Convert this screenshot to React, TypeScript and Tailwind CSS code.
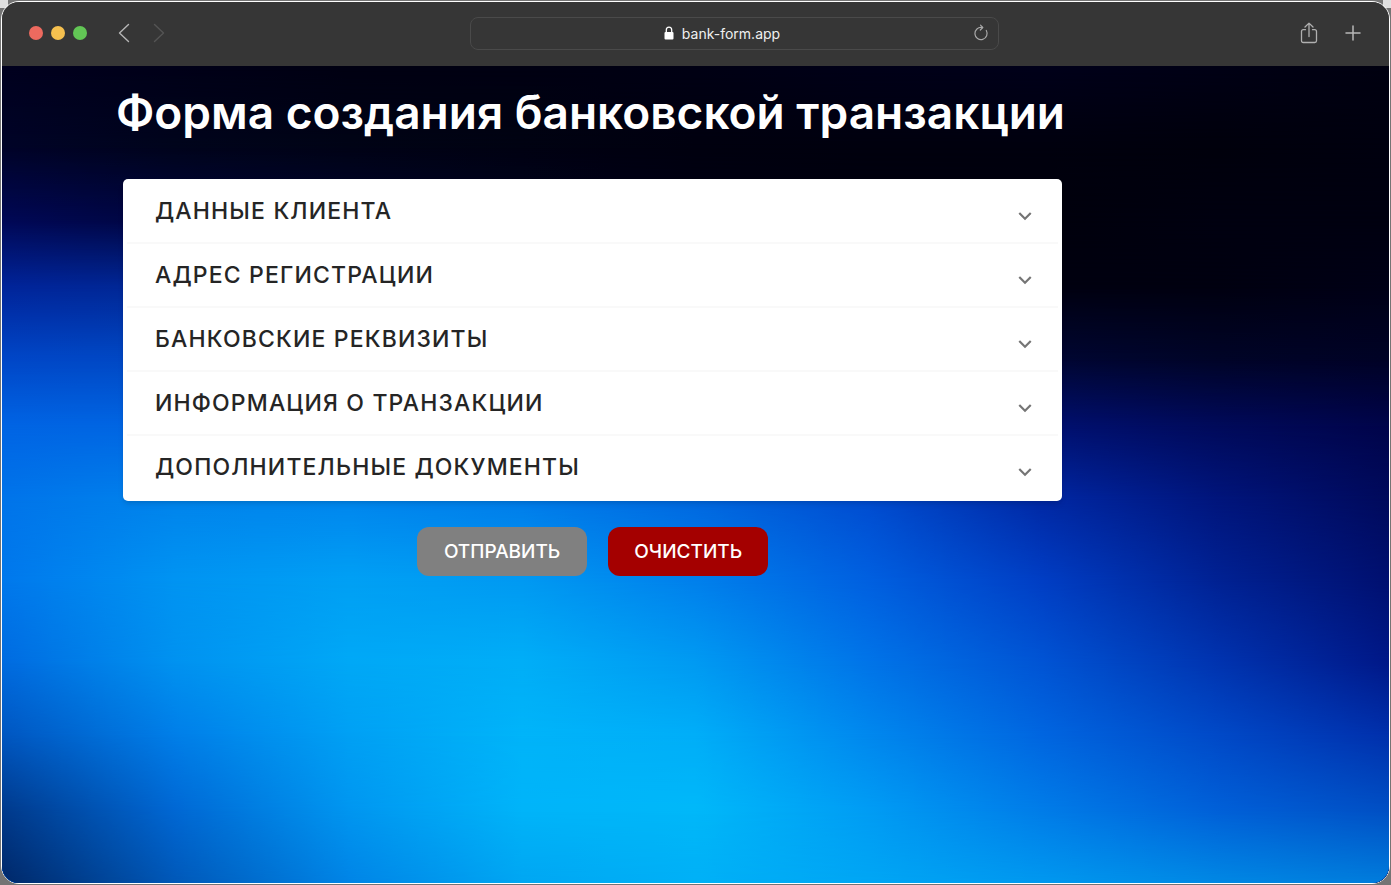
import React, { useState } from 'react';

/* Colour mesh of the backdrop: one horizontal gradient per row, blended downwards. */
const MESH: { y: number; colors: string[] }[] = [
  { y: 0, colors: ['#00001e', '#000018', '#000012', '#000012', '#000014', '#000018', '#00001a', '#000015', '#000010'] },
  { y: 10, colors: ['#000328', '#00041c', '#000316', '#000212', '#00000f', '#00000e', '#00000e', '#00000c', '#00000f'] },
  { y: 19, colors: ['#000856', '#000640', '#000430', '#000220', '#000014', '#00000e', '#00000c', '#000010', '#000010'] },
  { y: 27, colors: ['#00249a', '#002894', '#002080', '#001560', '#000a40', '#000420', '#000010', '#000010', '#000016'] },
  { y: 36, colors: ['#0047c8', '#0049c4', '#0048c0', '#0034a8', '#001c80', '#000c50', '#000634', '#000428', '#000226'] },
  { y: 44, colors: ['#0064e4', '#0066e2', '#0064e0', '#0054d0', '#0040b8', '#002490', '#001070', '#000a5a', '#00044a'] },
  { y: 53, colors: ['#0074ea', '#0084ec', '#0086ee', '#007cea', '#0068e0', '#004cd0', '#0028a4', '#00157c', '#000a5c'] },
  { y: 63, colors: ['#0078ec', '#0094f2', '#00a0f4', '#009af2', '#0080ec', '#0060e0', '#003ec4', '#002294', '#001070'] },
  { y: 73, colors: ['#006be0', '#0092f0', '#00a8f6', '#00aef7', '#009af2', '#0074e8', '#0054d4', '#0034b0', '#001888'] },
  { y: 82, colors: ['#0056c0', '#007ee8', '#00a0f4', '#00b4f9', '#00aef8', '#0088ee', '#0066e0', '#004ac8', '#0030ac'] },
  { y: 91, colors: ['#003a8c', '#0068d4', '#0096f0', '#00b4f9', '#00b8f9', '#009cf4', '#007ce8', '#0060d8', '#004fc4'] },
  { y: 100, colors: ['#002868', '#0058b8', '#0084e6', '#00a6f2', '#00b0f6', '#00a6f4', '#0098ef', '#0088e4', '#007cdc'] },
];

const SECTIONS = [
  'ДАННЫЕ КЛИЕНТА',
  'АДРЕС РЕГИСТРАЦИИ',
  'БАНКОВСКИЕ РЕКВИЗИТЫ',
  'ИНФОРМАЦИЯ О ТРАНЗАКЦИИ',
  'ДОПОЛНИТЕЛЬНЫЕ ДОКУМЕНТЫ',
];

function Backdrop() {
  return (
    <div aria-hidden="true" className="absolute inset-0 -z-10">
      {MESH.map((row, i) => {
        const fade =
          i === 0 ? undefined : `linear-gradient(to bottom, transparent ${MESH[i - 1].y}%, black ${row.y}%)`;
        return (
          <div
            key={row.y}
            className="absolute inset-0"
            style={{ backgroundImage: `linear-gradient(to right, ${row.colors.join(', ')})`, maskImage: fade }}
          />
        );
      })}
    </div>
  );
}

function BrowserBar() {
  return (
    <header className="grid h-16 grid-cols-[468fr_529fr_390fr] items-center bg-[#363636] pb-0.5">
      <div className="flex items-center pl-[27px]">
        <div className="flex gap-2">
          <span className="size-3.5 rounded-full bg-[#ed6a5f]" />
          <span className="size-3.5 rounded-full bg-[#f5c04f]" />
          <span className="size-3.5 rounded-full bg-[#62c655]" />
        </div>
        <div className="ml-7 flex gap-3.5">
          <button type="button" aria-label="Назад" className="text-[#b5b5b5]">
            <svg width="20" height="20" viewBox="0 0 20 20" fill="none" stroke="currentColor" strokeWidth="1.4" strokeLinecap="round" strokeLinejoin="round">
              <path d="M13.500 1.500 4.500 10l9 8.500" />
            </svg>
          </button>
          <button type="button" aria-label="Вперёд" className="text-[#545454]">
            <svg width="20" height="20" viewBox="0 0 20 20" fill="none" stroke="currentColor" strokeWidth="1.4" strokeLinecap="round" strokeLinejoin="round">
              <path d="m5.500 1.500 9 8.500-9 8.500" />
            </svg>
          </button>
        </div>
      </div>
      <div className="flex h-[33px] items-center rounded-lg border border-[#4a4a4a] pr-[9px]">
        <label className="flex flex-1 items-center justify-center gap-2">
          <svg width="10" height="14" viewBox="0 0 10 14" className="text-white">
            <path d="M2.300 6.500V4a2.700 2.900 0 0 1 5.400 0v2.500" fill="none" stroke="currentColor" strokeWidth="1.300" />
            <rect x="0.500" y="6" width="9" height="7.500" rx="1" fill="currentColor" />
          </svg>
          <input
            type="text"
            aria-label="Адрес"
            defaultValue="bank-form.app"
            className="[field-sizing:content] bg-transparent font-['Inter',sans-serif] text-[14px] text-[#f0f0f0] outline-none"
          />
        </label>
        <button type="button" aria-label="Обновить" className="text-[#a8a8a8]">
          <svg width="16" height="18" viewBox="0 0 16 18" fill="none" stroke="currentColor" strokeWidth="1.200" strokeLinecap="round" strokeLinejoin="round">
            <path d="M9 3.500A6.100 6.100 0 1 0 13.300 6.500" />
            <path d="M7.500 1.200 9.800 3.500 7.300 6" />
          </svg>
        </button>
      </div>
      <div className="flex items-center justify-end gap-6 pr-[26px]">
        <button type="button" aria-label="Поделиться" className="text-[#b0b0b0]">
          <svg width="20" height="22" viewBox="0 0 20 22" fill="none" stroke="currentColor" strokeWidth="1.300" strokeLinecap="round" strokeLinejoin="round">
            <path d="M6.500 7.700H4.200a1.700 1.700 0 0 0-1.700 1.700v9.400a1.700 1.700 0 0 0 1.700 1.700h11.600a1.700 1.700 0 0 0 1.700-1.700V9.400a1.700 1.700 0 0 0-1.700-1.700h-2.300" />
            <path d="M10 14.500V1.200M6 5l4-3.900L14 5" />
          </svg>
        </button>
        <button type="button" aria-label="Новая вкладка" className="text-[#b8b8b8]">
          <svg width="20" height="20" viewBox="0 0 20 20" fill="none" stroke="currentColor" strokeWidth="1.500" strokeLinecap="round">
            <path d="M10 3v14M3 10h14" />
          </svg>
        </button>
      </div>
    </header>
  );
}

function Section({ title }: { title: string }) {
  const [open, setOpen] = useState(false);
  return (
    <h2 className="border-b-2 border-[#f9f9f9] last:border-transparent">
      <button
        type="button"
        aria-expanded={open}
        onClick={() => setOpen(!open)}
        className="flex h-[62px] w-full items-center justify-between pr-5 pl-7 text-left text-[23px] font-medium tracking-wider text-[#252525]"
      >
        <span>{title}</span>
        <svg width="26" height="26" viewBox="0 0 24 24" fill="#757575" className="mt-2.5">
          <path d="M16.590 8.590 12 13.170 7.410 8.590 6 10l6 6 6-6z" />
        </svg>
      </button>
    </h2>
  );
}

export default function App() {
  return (
    <div className="flex min-h-screen bg-[#747474] bg-[linear-gradient(#e0e0e0,#e0e0e0),linear-gradient(#e0e0e0,#e0e0e0)] bg-[length:8px_8px] bg-[position:left_top,right_top] bg-no-repeat p-px">
      <div className="flex flex-1 flex-col overflow-hidden rounded-[18px] border border-white">
        <BrowserBar />
        <main className="relative isolate flex-1 px-[114px] font-['Inter',sans-serif]">
          <Backdrop />
          <form className="max-w-[953px]" onSubmit={(e) => e.preventDefault()}>
            <h1 className="pt-[18px] text-[46px] leading-[56px] font-semibold whitespace-nowrap text-white">
              Форма создания банковской транзакции
            </h1>
            <div className="mx-[7px] mt-[39px] rounded-[5px] bg-white px-1 py-px shadow-md">
              {SECTIONS.map((title) => (
                <Section key={title} title={title} />
              ))}
            </div>
            <div className="mt-[26px] flex justify-center gap-[21px]">
              <button type="submit" className="h-[49px] rounded-xl bg-[#808080] px-[27px] pt-0.5 text-[19px] font-medium text-white">
                ОТПРАВИТЬ
              </button>
              <button type="reset" className="h-[49px] rounded-xl bg-[#a40000] px-[26px] pt-0.5 text-[19px] font-medium text-white">
                ОЧИСТИТЬ
              </button>
            </div>
          </form>
        </main>
      </div>
    </div>
  );
}
